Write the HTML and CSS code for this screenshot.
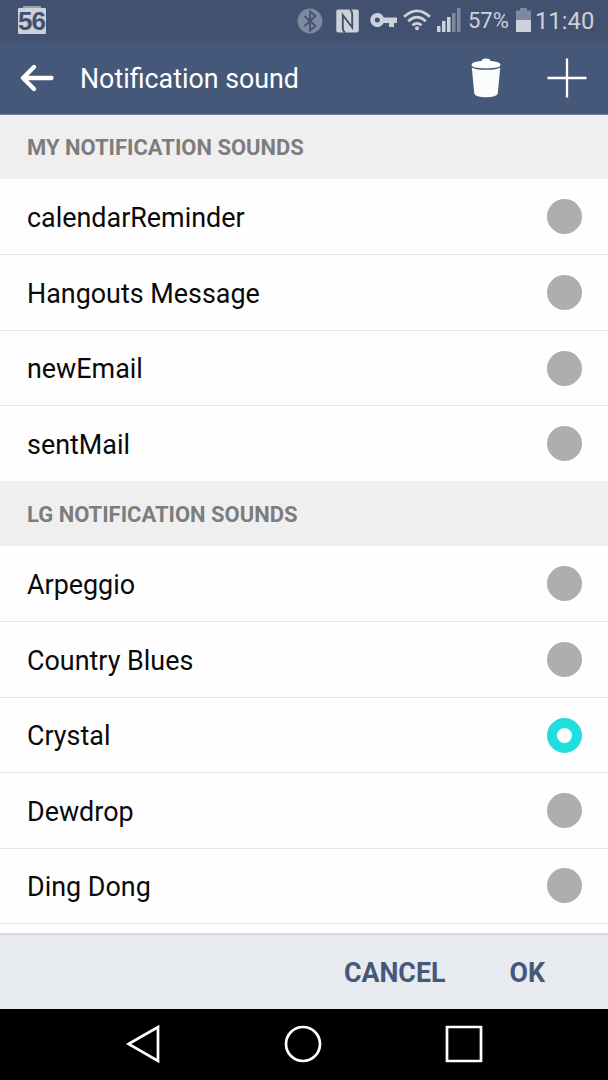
FILE: index.html
```
<!DOCTYPE html>
<html lang="en">
<head>
    <meta charset="UTF-8">
    <meta name="viewport" content="width=device-width, initial-scale=1.0">
    <title>Notification sound</title>
    <link rel="stylesheet" href="styles.css">
</head>
<body>

    <div class="screen">
        <!-- Status bar -->
        <div class="status-bar">
            <div class="temperature">56</div>
            <div class="status-icons">
                <svg class="bluetooth" width="26" height="26" viewBox="0 0 26 26">
                    <circle cx="13" cy="13" r="12.4" fill="#7c89a0"/>
                    <path d="M7.500 8l11 10-5.500 4.500v-19L18.500 8l-11 10" fill="none" stroke="#435170" stroke-width="1.800"/>
                </svg>
                <svg class="nfc" width="23" height="24" viewBox="0 0 23 24">
                    <rect x=".3" y=".5" width="22.500" height="23" rx="2" fill="#ccd1da"/>
                    <path d="M9 23.500Q6.800 22 6.800 19V6l9.400 12.500V5q0-3-2.200-4.500" fill="none" stroke="#435170" stroke-width="1.900"/>
                </svg>
                <svg class="key" width="27" height="16" viewBox="0 0 27 16">
                    <path fill-rule="evenodd" d="M7.300 0a7 7 0 1 0 6.300 10H19v4h5v-4h3V4.500H13.700A7 7 0 0 0 7.300 0zm0 4.600a2.500 2.500 0 1 1 0 5 2.500 2.500 0 0 1 0-5z" fill="#ccd1da"/>
                </svg>
                <svg class="wifi" width="28" height="22" viewBox="0 0 28 22">
                    <g fill="none" stroke="#ccd1da" stroke-width="2.700">
                        <path d="M1 7.800q13-12 26 0"/>
                        <path d="M5.200 12.200q8.800-8 17.600 0"/>
                        <path d="M9.400 16.300q4.600-4 9.200 0"/>
                    </g>
                    <circle cx="14" cy="19.300" r="2" fill="#ccd1da"/>
                </svg>
                <svg class="signal" width="24" height="24" viewBox="0 0 24 24">
                    <path d="M0 18h3.500v6H0zM5 13h3.500v11H5zM10 9h3.500v15H10z" fill="#ccd1da"/>
                    <path d="M15 5h3.500v19H15zM20 0h3.500v24H20z" fill="#7c89a0"/>
                </svg>
                <span class="percent">57%</span>
                <svg class="battery" width="15" height="24" viewBox="0 0 15 24">
                    <path d="M4 0h7v2.500h4V12H0V2.500h4z" fill="#7c89a0"/>
                    <path d="M0 12h15v12H0z" fill="#ccd1da"/>
                </svg>
                <span class="clock">11:40</span>
            </div>
        </div>

        <!-- Title bar -->
        <header class="title-bar">
            <svg class="back" width="34" height="28" viewBox="0 0 34 28">
                <path d="M14 3L3 14l11 11M3 14h28.500" fill="none" stroke="#fff" stroke-width="4.300" stroke-linecap="round" stroke-linejoin="round"/>
            </svg>
            <h1>Notification sound</h1>
            <svg class="trash" width="30" height="40" viewBox="0 0 30 40">
                <path d="M10.500 3q0-2.500 4.500-2.500T19.500 3q10 .8 10 3.800 0 3.500-14.500 3.500T.5 6.800q0-3 10-3.800z" fill="#fff"/>
                <path d="M.8 9.500Q4 11.800 15 11.800t14.200-2.300l-2.400 26.300Q25.500 39.200 15 39.200T3.300 35.800z" fill="#fafbfb"/>
            </svg>
            <svg class="plus" width="40" height="40" viewBox="0 0 40 40">
                <path d="M20 .5v39M.5 20h39" stroke="#fff" stroke-width="2.300"/>
            </svg>
        </header>

        <!-- Sound list -->
        <main class="sound-list">
            <h2>MY NOTIFICATION SOUNDS</h2>
            <ul>
                <li>calendarReminder<span class="radio"></span></li>
                <li>Hangouts Message<span class="radio"></span></li>
                <li>newEmail<span class="radio"></span></li>
                <li>sentMail<span class="radio"></span></li>
            </ul>
            <h2>LG NOTIFICATION SOUNDS</h2>
            <ul>
                <li>Arpeggio<span class="radio"></span></li>
                <li>Country Blues<span class="radio"></span></li>
                <li>Crystal<span class="radio selected"></span></li>
                <li>Dewdrop<span class="radio"></span></li>
                <li>Ding Dong<span class="radio"></span></li>
                <li></li>
            </ul>
        </main>

        <div class="actions">
            <a class="cancel">CANCEL</a>
            <a class="ok">OK</a>
        </div>

        <!-- Navigation keys -->
        <nav class="nav-bar">
            <svg width="36" height="40" viewBox="0 0 36 40">
                <path d="M2.500 20L32 3v34z" fill="none" stroke="#fff" stroke-width="2.700"/>
            </svg>
            <svg width="40" height="40" viewBox="0 0 40 40">
                <circle cx="20" cy="20" r="17" fill="none" stroke="#fff" stroke-width="2.700"/>
            </svg>
            <svg width="40" height="40" viewBox="0 0 40 40">
                <path d="M3 3h34v34H3z" fill="none" stroke="#fff" stroke-width="2.700"/>
            </svg>
        </nav>
    </div>

</body>
</html>
```
FILE: styles.css
```
* {
    box-sizing: border-box;
}

body {
    margin: 0;
    font-family: Roboto, sans-serif;
    background-color: #000;
}

.screen {
    width: 608px;
    height: 1080px;
    display: flex;
    flex-direction: column;
    overflow: hidden;
}

/* Status bar */
.status-bar {
    height: 41px;
    flex: none;
    display: flex;
    justify-content: space-between;
    align-items: center;
    padding: 0 14px 0 18px;
    background-color: #435170;
    color: #ccd1da;
    font-size: 24px;
}

.temperature {
    position: relative;
    width: 28px;
    height: 26px;
    border-radius: 1px;
    background-color: #ccd1da;
    color: #435170;
    font: bold 26px/26px "Liberation Sans", sans-serif;
    letter-spacing: -1px;
}

/* Tab on top of the badge */
.temperature::before {
    content: '';
    position: absolute;
    top: -2px;
    left: 5px;
    width: 18px;
    height: 2px;
    background-color: #98a2b4;
}

.status-icons {
    display: flex;
    align-items: center;
}

.nfc {
    margin-left: 13px;
}

.key {
    margin-left: 11px;
}

.wifi {
    margin-left: 6px;
    margin-top: -2px;
}

.signal {
    margin-left: 6px;
    margin-top: -1px;
}

.percent {
    width: 48px;
    padding-left: 7px;
    font-size: 22px;
    white-space: nowrap;
}

.battery {
    margin-left: 7px;
    margin-top: -1px;
}

.clock {
    width: 63px;
    padding-left: 4px;
    font-size: 23.8px;
}

/* Title bar */
.title-bar {
    height: 74px;
    flex: none;
    display: flex;
    align-items: center;
    padding: 0 21px 0 20px;
    background-color: #465879;
    border-bottom: 1px solid #6f7e9a;
    color: #fff;
}

h1 {
    margin: 0 0 0 26px;
    padding-top: 2px;
    font-size: 26.8px;
    font-weight: 400;
}

.trash {
    margin-left: auto;
}

.plus {
    margin-left: 46px;
}

/* Sound list */
.sound-list {
    height: 818px;
    flex: none;
    overflow: hidden;
    background-color: #fefefe;
}

h2 {
    height: 64px;
    margin: 0;
    padding-left: 27px;
    background-color: #efefef;
    color: #7d7d7d;
    font-size: 21.97px;
    line-height: 66px;
}

ul + h2 {
    height: 64.6px;
    line-height: 67px;
}

ul {
    list-style-type: none;
    margin: 0;
    padding: 0 0 0.8px;
}

li {
    height: 75.4px;
    display: flex;
    justify-content: space-between;
    align-items: center;
    padding: 2.6px 26.5px 0 27px;
    color: #0a0a0a;
    font-size: 26.9px;
}

li + li {
    border-top: 1px solid #e4e4e4;
}

.radio {
    width: 35px;
    height: 35px;
    margin-top: -2.4px;
    border-radius: 50%;
    background-color: #aeaeae;
}

.radio.selected {
    border: 10px solid #1fdedb;
    background-color: #fff;
}

/* Bottom buttons */
.actions {
    height: 76px;
    flex: none;
    display: flex;
    justify-content: flex-end;
    align-items: center;
    gap: 64px;
    padding: 2px 63px 0 0;
    background-color: #e7eaef;
    border-top: 2px solid #d8d9dc;
    color: #465879;
    font-size: 26.8px;
    font-weight: bold;
}

/* Navigation keys */
.nav-bar {
    flex: 1;
    display: flex;
    justify-content: space-between;
    align-items: center;
    padding: 0 124px 1px 126px;
    background-color: #000;
}
```
